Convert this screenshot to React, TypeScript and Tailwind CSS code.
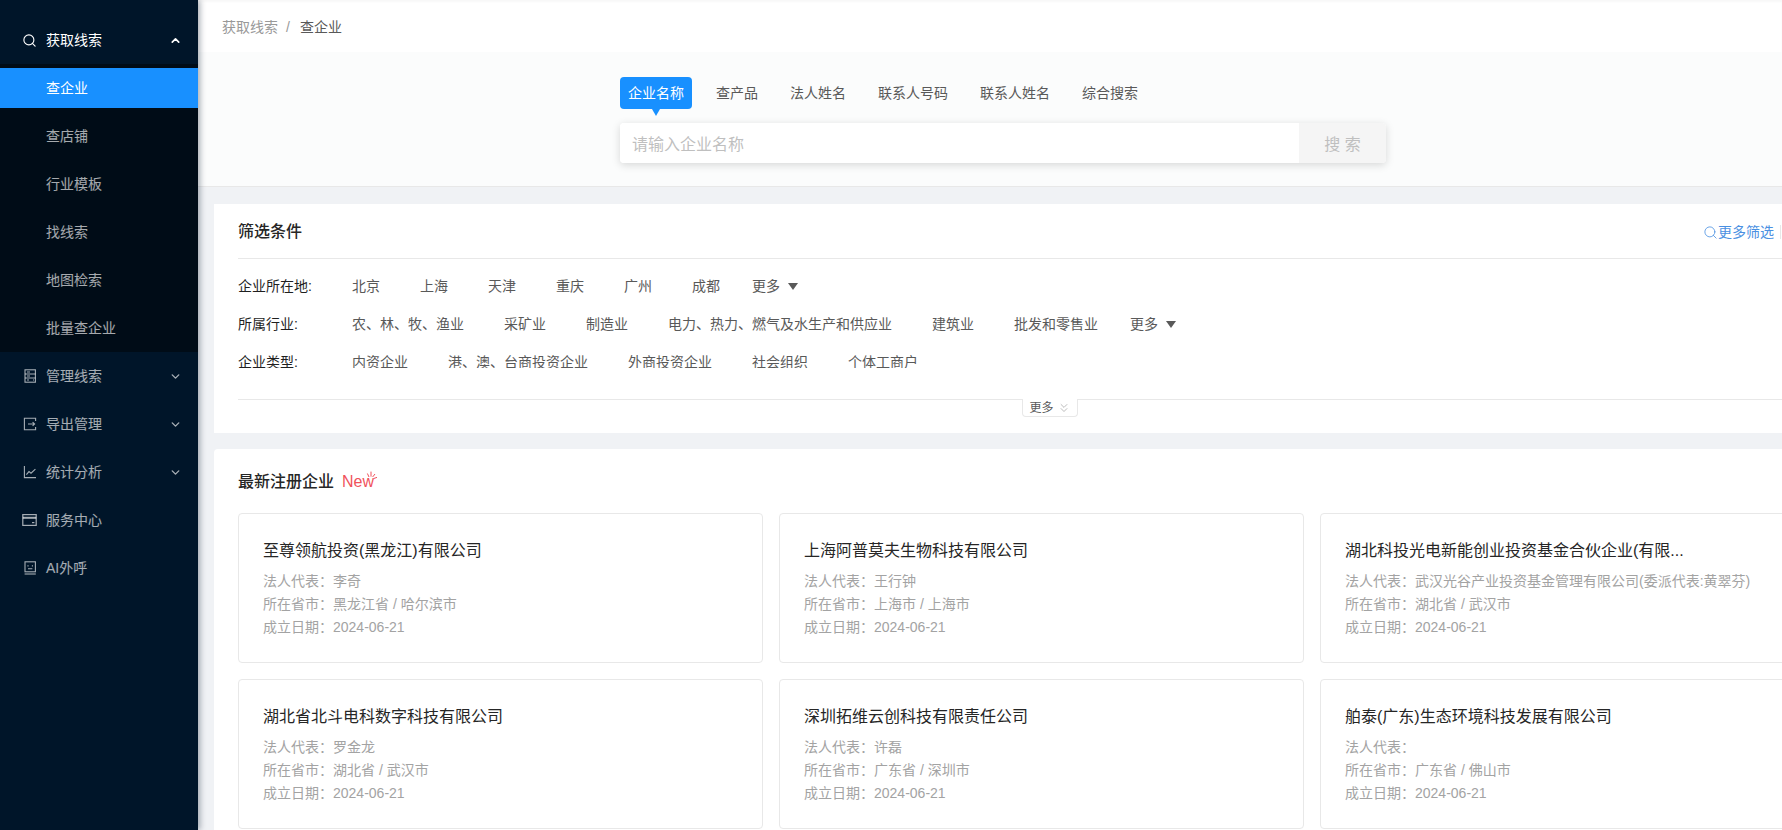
import { ChevronUp, ChevronDown, ChevronsDown, Search } from 'lucide-react';

const subItems = ['查企业', '查店铺', '行业模板', '找线索', '地图检索', '批量查企业'];

const ManageIcon = () => (
  <svg width="14" height="14" viewBox="0 0 14 14" fill="none" stroke="currentColor" strokeWidth="1.1">
    <rect x="2" y="0.8" width="10.4" height="12.4" />
    <path d="M2 5h10.4M2 9h10.4" />
    <path d="M4 3h3M4 7h3M4 11h2M10 11h1" />
  </svg>
);

const ExportIcon = () => (
  <svg width="14" height="14" viewBox="0 0 14 14" fill="none" stroke="currentColor" strokeWidth="1.1">
    <path d="M12.6 4V1.2H1.4v11.6h11.2V10" />
    <path d="M5 7h6.5M9.6 5.2 11.6 7 9.6 8.8" />
  </svg>
);

const ChartIcon = () => (
  <svg width="14" height="14" viewBox="0 0 14 14" fill="none" stroke="currentColor" strokeWidth="1.1">
    <path d="M1.4 1v11.6h11.6" />
    <path d="M3.4 9.6 6 6.6l2 1.6 4.4-4" />
  </svg>
);

const ServiceIcon = () => (
  <svg width="15" height="14" viewBox="0 0 15 14" fill="none" stroke="currentColor" strokeWidth="1.2">
    <rect x="0.8" y="1.6" width="13.4" height="10.8" />
    <path d="M0.8 4.8h13.4" strokeWidth="2" />
    <path d="M10 9.6h2.4" />
  </svg>
);

const RobotIcon = () => (
  <svg width="14" height="14" viewBox="0 0 14 14" fill="none" stroke="currentColor" strokeWidth="1.1">
    <rect x="2" y="0.8" width="10.4" height="10" />
    <path d="M1.6 13h11.2" />
    <path d="M5 4.2v1.2M9.4 4.2v1.2M5 7.8h4.4" />
  </svg>
);

const bottomItems = [
  { label: '管理线索', icon: <ManageIcon />, arrow: true },
  { label: '导出管理', icon: <ExportIcon />, arrow: true },
  { label: '统计分析', icon: <ChartIcon />, arrow: true },
  { label: '服务中心', icon: <ServiceIcon />, arrow: false },
  { label: 'AI外呼', icon: <RobotIcon />, arrow: false },
];

const tabs = ['查产品', '法人姓名', '联系人号码', '联系人姓名', '综合搜索'];

const companies = [
  { name: '至尊领航投资(黑龙江)有限公司', person: '李奇', area: '黑龙江省 / 哈尔滨市' },
  { name: '上海阿普莫夫生物科技有限公司', person: '王行钟', area: '上海市 / 上海市' },
  { name: '湖北科投光电新能创业投资基金合伙企业(有限...', person: '武汉光谷产业投资基金管理有限公司(委派代表:黄翠芬)', area: '湖北省 / 武汉市' },
  { name: '湖北省北斗电科数字科技有限公司', person: '罗金龙', area: '湖北省 / 武汉市' },
  { name: '深圳拓维云创科技有限责任公司', person: '许磊', area: '广东省 / 深圳市' },
  { name: '舶泰(广东)生态环境科技发展有限公司', person: '', area: '广东省 / 佛山市' },
];

const MoreOption = () => (
  <span className="ml-8 flex items-center text-[#595959]">
    更多
    <span className="ml-2 h-0 w-0 border-x-[5.5px] border-t-[7px] border-x-transparent border-t-[#595959]" />
  </span>
);

const FilterRow = ({ label, options, more }: { label: string; options: string[]; more?: boolean }) => (
  <div className="flex h-[38px] items-center leading-[22px]">
    <span className="w-[114px] shrink-0 text-[#1f1f1f]">{label}</span>
    <div className="flex gap-10 text-[#595959]">
      {options.map((o) => (
        <span key={o}>{o}</span>
      ))}
    </div>
    {more && <MoreOption />}
  </div>
);

const CompanyCard = ({ name, person, area }: { name: string; person: string; area: string }) => (
  <div className="h-[150px] rounded-sm border border-[#e8e8e8] bg-white px-6 pt-[25px]">
    <div className="text-base leading-[24px] text-[#262626]">{name}</div>
    <div className="mt-[7px] text-[#a3a3a3] leading-[23px]">
      <div>法人代表：{person}</div>
      <div>所在省市：{area}</div>
      <div>成立日期：2024-06-21</div>
    </div>
  </div>
);

export default function App() {
  return (
    <div className="flex h-[830px] w-[1782px] overflow-hidden bg-[#f0f2f5] font-['Liberation_Sans','Noto_Sans_CJK_SC',sans-serif] text-sm">
      <aside className="relative z-10 w-[198px] shrink-0 bg-[#001529] pt-4 shadow-[2px_0_6px_rgba(0,21,41,0.35)]">
        <div className="flex h-12 items-center pl-[22px] pr-[16px] text-white">
          <Search size={15} strokeWidth={1.8} />
          <span className="ml-[9px] flex-1">获取线索</span>
          <ChevronUp size={13} strokeWidth={3} />
        </div>
        <div className="flex flex-col gap-2 bg-[#000c17] py-1">
          {subItems.map((item, i) => (
            <div
              key={item}
              className={
                i === 0
                  ? 'flex h-10 items-center bg-[#1890ff] pl-[46px] text-white'
                  : 'flex h-10 items-center pl-[46px] text-white/65'
              }
            >
              {item}
            </div>
          ))}
        </div>
        {bottomItems.map((item) => (
          <div key={item.label} className="flex h-12 items-center pl-[22px] pr-[16px] text-white/65">
            <span className="flex w-[15px] justify-center">{item.icon}</span>
            <span className="ml-[9px] flex-1">{item.label}</span>
            {item.arrow && <ChevronDown size={13} strokeWidth={2.6} />}
          </div>
        ))}
      </aside>

      <main className="min-w-0 flex-1 overflow-hidden">
        <div className="flex h-[52px] items-center bg-white pl-6 pt-[2px] shadow-[inset_0_2px_2px_rgba(0,0,0,0.03)]">
          <span className="text-[#999999]">获取线索</span>
          <span className="ml-2 mr-[10px] text-[#999999]">/</span>
          <span className="text-[#595959]">查企业</span>
        </div>

        <section className="h-[135px] border-b border-[#e8e8e8] bg-[#fbfcfc] pl-[422px] pt-[25px]">
          <div className="flex items-center gap-4">
            <div className="relative flex h-8 w-[72px] items-center justify-center rounded bg-[#1890ff] text-white">
              企业名称
              <span className="absolute left-1/2 top-full h-0 w-0 -translate-x-1/2 border-x-[4px] border-t-[7px] border-x-transparent border-t-[#1890ff]" />
            </div>
            {tabs.map((t) => (
              <span key={t} className="px-2 text-[#595959]">
                {t}
              </span>
            ))}
          </div>
          <div className="mt-[14px] flex h-10 w-[766px] overflow-hidden rounded bg-white shadow-[0_2px_8px_rgba(0,0,0,0.15)]">
            <input
              readOnly
              placeholder="请输入企业名称"
              className="min-w-0 flex-1 bg-white px-3 pt-1 text-base outline-none placeholder:text-[#bfbfbf]"
            />
            <div className="flex w-[87px] items-center justify-center bg-[#f5f5f5] pt-1 text-base text-[#bfbfbf]">搜 索</div>
          </div>
        </section>

        <div className="ml-4 mt-[17px] w-[1672px]">
          <section className="h-[229px] bg-white px-6">
            <div className="flex h-[55px] items-center justify-between border-b border-[#e8e8e8] pt-[2px]">
              <h2 className="text-base font-medium leading-6 text-[#262626]">筛选条件</h2>
              <div className="mr-[81px] flex items-center text-[#4a90e2]">
                <Search size={15} strokeWidth={1.3} />
                <span>更多筛选</span>
                <span className="ml-[6px] h-[14px] w-px bg-[#e8e8e8]" />
              </div>
            </div>
            <div className="h-[109px] overflow-hidden pt-2">
              <FilterRow label="企业所在地:" options={['北京', '上海', '天津', '重庆', '广州', '成都']} more />
              <FilterRow
                label="所属行业:"
                options={['农、林、牧、渔业', '采矿业', '制造业', '电力、热力、燃气及水生产和供应业', '建筑业', '批发和零售业']}
                more
              />
              <FilterRow label="企业类型:" options={['内资企业', '港、澳、台商投资企业', '外商投资企业', '社会组织', '个体工商户']} />
            </div>
            <div className="relative mt-[31px] border-t border-[#e8e8e8]">
              <div className="absolute left-1/2 top-[-1px] flex h-[18px] w-[56px] -translate-x-1/2 items-center justify-center rounded-b-sm border-x border-b border-[#e8e8e8] bg-white text-xs text-[#595959]">
                更多
                <ChevronsDown size={14} strokeWidth={1} className="ml-[3px] text-[#8c8c8c]" />
              </div>
            </div>
          </section>

          <section className="mt-4 rounded-t-sm bg-white px-6 pb-4">
            <div className="flex h-16 items-center pt-[2px]">
              <h2 className="text-base font-medium leading-6 text-[#262626]">最新注册企业</h2>
              <span className="relative ml-2 text-base leading-6 text-[#f0525c]">
                New
                <svg className="absolute left-[22px] top-[1px]" width="14" height="10" viewBox="0 0 14 10" fill="none" stroke="#f0525c" strokeWidth="1">
                  <path d="M5 6 3.4 2.5M7 5.6V0.6M8.6 6l2.4-3M10 7.4l3-1" />
                </svg>
              </span>
            </div>
            <div className="grid grid-cols-[repeat(3,525px)] gap-4">
              {companies.map((c) => (
                <CompanyCard key={c.name} {...c} />
              ))}
            </div>
          </section>
        </div>
      </main>
    </div>
  );
}
